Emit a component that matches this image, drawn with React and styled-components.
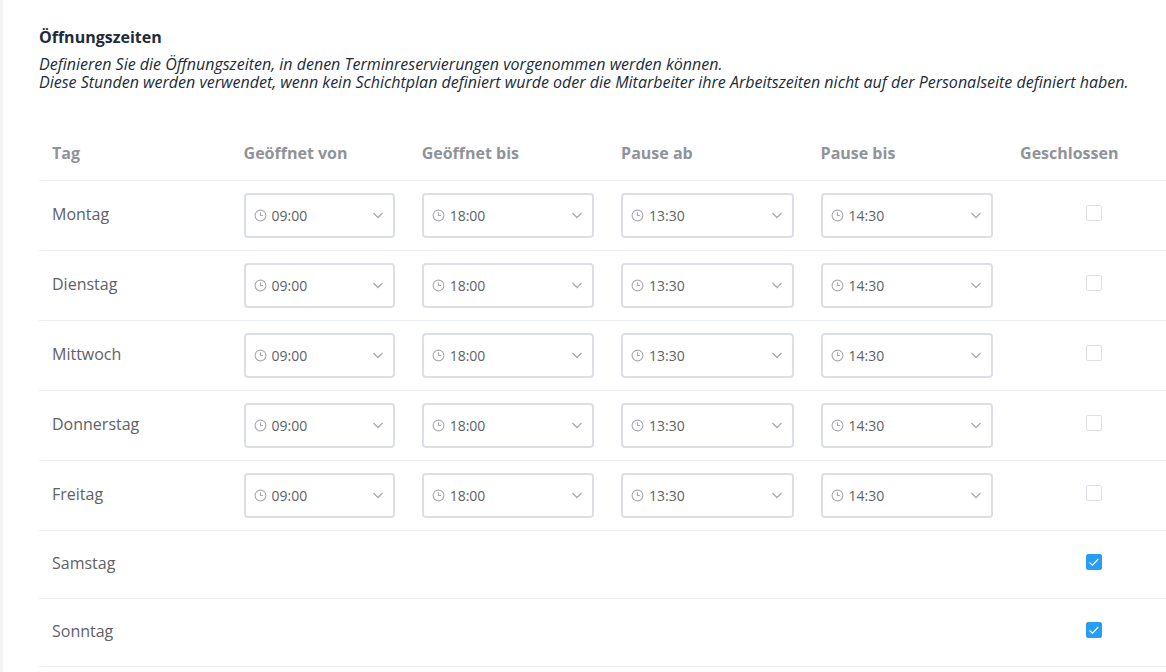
import React, { useState } from 'react'
import styled, { createGlobalStyle } from 'styled-components'

const GlobalStyle = createGlobalStyle`
  * {
    box-sizing: border-box;
  }
  body {
    margin: 0;
    background: #f3f3f3;
    color: #212b3a;
    font-family: 'Open Sans', 'Noto Sans', sans-serif;
    font-size: 16px;
  }
`

const Panel = styled.main`
  min-height: 100vh;
  margin-left: 3px;
  padding: 28px 0 0 36px;
  background: #fff;
`

const Title = styled.h1`
  margin: 0 0 9px;
  font-size: 16px;
  font-weight: 700;
  line-height: 18px;
`

const Description = styled.p`
  margin: 0;
  font-style: italic;
  line-height: 18px;
`

const HoursTable = styled.table`
  width: 100%;
  margin-top: 35px;
  border-collapse: separate;
  border-spacing: 0;
  table-layout: fixed;
`

const Col = styled.col`
  width: ${(props) => props.$width};
`

const HeadCell = styled.th`
  height: 55px;
  padding: 0 13px;
  border-bottom: 1px solid #ebeef5;
  color: #909399;
  font-weight: 700;
  text-align: left;
  white-space: nowrap;
`

const Cell = styled.td`
  height: ${(props) => (props.$closed ? '68px' : '70px')};
  padding: 0 14px 0 13px;
  border-bottom: 1px solid #ebeef5;
  color: #606266;
`

const DayCell = styled(Cell).attrs({ as: 'th', scope: 'row' })`
  padding-bottom: 3px;
  font-weight: 400;
  text-align: left;
`

const CheckCell = styled(Cell)`
  padding: 0 0 5px 79px;
`

const SelectBox = styled.div`
  position: relative;
  color: #a8abb2;
`

const TimeSelect = styled.select`
  display: block;
  width: 100%;
  height: 45px;
  padding: 0 30px 0 26px;
  border: 2px solid #dcdfe6;
  border-radius: 4px;
  background: #fff;
  color: #606266;
  font-family: inherit;
  font-size: 14px;
  appearance: none;
`

const ClockIcon = styled.svg`
  position: absolute;
  top: 16px;
  left: 10px;
  width: 13px;
  height: 13px;
  pointer-events: none;
`

const ArrowIcon = styled.svg`
  position: absolute;
  top: 17px;
  right: 11px;
  width: 12px;
  height: 10px;
  pointer-events: none;
`

const CheckLabel = styled.label`
  display: block;
  position: relative;
  width: 16px;
  height: 16px;
`

const Checkbox = styled.input`
  display: block;
  width: 16px;
  height: 16px;
  margin: 0;
  border: 1px solid #dcdfe6;
  border-radius: 2px;
  background: #fff;
  appearance: none;

  &:checked {
    border-color: #289df5;
    background: #289df5;
  }
`

const CheckMark = styled.svg`
  position: absolute;
  top: 0;
  left: 0;
  width: 16px;
  height: 16px;
  pointer-events: none;
`

const columns = [
  { key: 'from', label: 'Geöffnet von', time: '09:00' },
  { key: 'to', label: 'Geöffnet bis', time: '18:00' },
  { key: 'breakFrom', label: 'Pause ab', time: '13:30' },
  { key: 'breakTo', label: 'Pause bis', time: '14:30' },
]

const days = [
  { name: 'Montag', closed: false },
  { name: 'Dienstag', closed: false },
  { name: 'Mittwoch', closed: false },
  { name: 'Donnerstag', closed: false },
  { name: 'Freitag', closed: false },
  { name: 'Samstag', closed: true },
  { name: 'Sonntag', closed: true },
]

// one entry every half hour
const slots = Array.from({ length: 48 }, (_, i) => {
  const hour = String(Math.floor(i / 2)).padStart(2, '0')
  return `${hour}:${i % 2 ? '30' : '00'}`
})

function TimePicker({ label, time }) {
  return (
    <SelectBox>
      <TimeSelect aria-label={label} defaultValue={time}>
        {slots.map((slot) => (
          <option key={slot} value={slot}>{slot}</option>
        ))}
      </TimeSelect>
      <ClockIcon viewBox="0 0 13 13" fill="none" stroke="currentColor" strokeWidth="1.1" aria-hidden="true">
        <circle cx="6.5" cy="6.5" r="5.4" />
        <path d="M6.5 3.2V6.5H9" />
      </ClockIcon>
      <ArrowIcon viewBox="0 0 12 10" fill="none" stroke="currentColor" strokeWidth="1.3" aria-hidden="true">
        <path d="M1.5 3L6 7.5L10.5 3" />
      </ArrowIcon>
    </SelectBox>
  )
}

function DayRow({ day }) {
  const [closed, setClosed] = useState(day.closed)

  return (
    <tr>
      <DayCell $closed={closed}>{day.name}</DayCell>
      {columns.map((column) => (
        <Cell key={column.key} $closed={closed}>
          {!closed && <TimePicker label={`${day.name} ${column.label}`} time={column.time} />}
        </Cell>
      ))}
      <CheckCell $closed={closed}>
        <CheckLabel>
          <Checkbox
            type="checkbox"
            aria-label={`${day.name} Geschlossen`}
            checked={closed}
            onChange={(e) => setClosed(e.target.checked)}
          />
          {closed && (
            <CheckMark viewBox="0 0 16 16" fill="none" stroke="#fff" strokeWidth="1.1" aria-hidden="true">
              <path d="M3.5 8.5L6.5 11.2L12.3 5" />
            </CheckMark>
          )}
        </CheckLabel>
      </CheckCell>
    </tr>
  )
}

export default function App() {
  return (
    <>
      <GlobalStyle />
      <Panel>
        <Title>Öffnungszeiten</Title>
        <Description>
          Definieren Sie die Öffnungszeiten, in denen Terminreservierungen vorgenommen werden können.
          <br />
          Diese Stunden werden verwendet, wenn kein Schichtplan definiert wurde oder die Mitarbeiter ihre Arbeitszeiten nicht auf der Personalseite definiert haben.
        </Description>
        <HoursTable>
          <colgroup>
            <Col $width="17%" />
            <Col $width="15.8%" />
            <Col $width="17.7%" />
            <Col $width="17.7%" />
            <Col $width="17.7%" />
            <Col />
          </colgroup>
          <thead>
            <tr>
              <HeadCell scope="col">Tag</HeadCell>
              {columns.map((column) => (
                <HeadCell key={column.key} scope="col">{column.label}</HeadCell>
              ))}
              <HeadCell scope="col">Geschlossen</HeadCell>
            </tr>
          </thead>
          <tbody>
            {days.map((day) => (
              <DayRow key={day.name} day={day} />
            ))}
          </tbody>
        </HoursTable>
      </Panel>
    </>
  )
}
